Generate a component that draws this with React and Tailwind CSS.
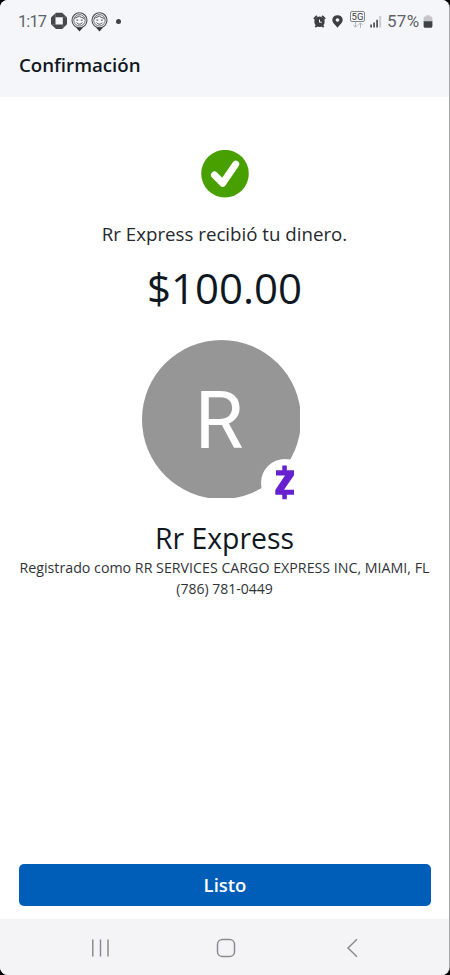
import React from "react";

function BankIcon() {
  return (
    <svg width="18" height="18" viewBox="0 0 18 18" className="shrink-0">
      <path d="M6 .7h6.200l4.800 4.800v6.700L12.200 17H6L1 12.200V5.500z" fill="#46494c" />
      <path d="M5.500 5.200h7.300v7.400H5.500z" fill="#f5f6f9" />
      <path d="M5.500 1v4.200M17 5.200h-4.200M12.800 16.800v-4.200M1 12.600h4.500" stroke="#85888b" strokeWidth=".5" />
    </svg>
  );
}

function FacePin() {
  return (
    <svg width="17" height="20" viewBox="0 0 17 20" className="shrink-0" fill="none" stroke="#4b4e51">
      <path d="M4.800 15.300h7.400L8.500 19.500z" fill="#36393c" stroke="none" />
      <circle cx="8.500" cy="8.300" r="7.500" strokeWidth="1.100" />
      <circle cx="8.500" cy="8.300" r="5.700" strokeWidth=".8" />
      <path d="M3.400 6.900C5.200 4.100 7 5.900 8.400 3.800c1 2.200 3.500 1.300 5.100 3.200M5.400 8.100h1.900M9.800 8.100h1.900M5.600 10.500c1.600 2.200 4.200 2.200 5.800 0" strokeWidth="1" />
    </svg>
  );
}

function AlarmIcon() {
  return (
    <svg width="13" height="13" viewBox="0 0 13 13" className="shrink-0">
      <path d="M.9 4 3.900.9M12.100 4 9.100.9M2.300 12.200l1.600-1.800M10.700 12.200l-1.600-1.800" stroke="#3c3f42" strokeWidth="1.800" />
      <circle cx="6.500" cy="6.800" r="5.200" fill="#3c3f42" />
      <path d="M6.500 4.500v2.700h2.300" fill="none" stroke="#f5f6f9" strokeWidth="1" />
    </svg>
  );
}

function LocationIcon() {
  return (
    <svg width="11" height="13" viewBox="0 0 10 13" className="shrink-0" preserveAspectRatio="none">
      <path d="M5 .2A4.700 4.700 0 0 0 .3 5C.3 8 3.200 9.800 5 12.700 6.800 9.800 9.700 8 9.700 5A4.700 4.700 0 0 0 5 .2zm0 3.100a1.700 1.700 0 1 1 0 3.400 1.700 1.700 0 0 1 0-3.400z" fill="#3c3f42" />
    </svg>
  );
}

function NetworkIcon() {
  return (
    <div className="flex w-[15px] shrink-0 flex-col items-center">
      <div className="flex h-[11px] w-[15px] items-center justify-center rounded-[2px] border border-[#85888b] text-[9.500px] leading-none text-[#3c3f42]">5G</div>
      <svg width="12" height="6" viewBox="0 0 12 6" fill="none" stroke="#b5b7ba" strokeWidth="1">
        <path d="M3.500 0v5M1.300 3l2.200 2.200L5.700 3M8.500 6V1M6.300 3l2.200-2.200L10.700 3" />
      </svg>
    </div>
  );
}

function SignalIcon() {
  return (
    <svg width="12" height="13" viewBox="0 0 12 13" className="shrink-0">
      <path d="M.2 9.500h1.800V12.500H.2zM3.200 7.500H5v5H3.200zM6.200 4.800H8v7.700H6.200z" fill="#56595c" />
      <path d="M9.200 1h2v11.500h-2z" fill="#c9cbce" />
    </svg>
  );
}

function BatteryIcon() {
  return (
    <svg width="10" height="13" viewBox="0 0 10 13" className="shrink-0">
      <path d="M3.200.3h3.600v1.200h1.100c.9 0 1.500.6 1.500 1.500v3.800H.6V3c0-.9.6-1.500 1.500-1.500h1.100z" fill="#c3c5c8" />
      <path d="M.6 6.300h8.800v4.900c0 .9-.6 1.500-1.500 1.500H2.100c-.9 0-1.500-.6-1.500-1.500z" fill="#404346" />
    </svg>
  );
}

function StatusBar() {
  return (
    <div className="flex h-[42px] items-center justify-between pr-[16px] pl-[18px] font-['Roboto',sans-serif] text-[#606366]">
      <div className="flex items-center">
        <span className="w-[32px] pt-[2px] text-[16.500px] tracking-[-0.900px]">1:17</span>
        <BankIcon />
        <span className="ml-[3px] flex gap-[2.500px] pt-px">
          <FacePin />
          <FacePin />
        </span>
        <span className="ml-[8px] size-[5px] rounded-full bg-[#404346]" />
      </div>
      <div className="flex items-center">
        <AlarmIcon />
        <span className="ml-[6px] flex"><LocationIcon /></span>
        <span className="ml-[7px] flex pb-[3px]"><NetworkIcon /></span>
        <span className="ml-[5px] flex"><SignalIcon /></span>
        <span className="ml-[5px] w-[36px] pt-px text-[17px] tracking-[0.300px]">57%</span>
        <BatteryIcon />
      </div>
    </div>
  );
}

function Avatar() {
  return (
    <div className="relative mt-[24px] mr-[8px] h-[158px] w-[158px]">
      <div className="size-full overflow-hidden">
        <div className="flex size-[159px] items-center justify-center rounded-full bg-[#969696] pt-[3px] pr-[4px] font-['Roboto',sans-serif] text-[79px] leading-none text-white">
          R
        </div>
      </div>
      <div className="absolute top-[119px] left-[119px] flex size-[48px] items-start rounded-full bg-white pt-[6px] pl-[14px]">
        <svg width="20" height="35" viewBox="0 0 20 35" fill="#6720cf">
          <path d="M7.300.5h4.500v4.700H19v5L9 24.700h10v5h-7.200v4.600H7.300v-4.600H.3v-4.600L10 10.500H1V5.200h6.300z" />
        </svg>
      </div>
    </div>
  );
}

export default function App() {
  return (
    <div className="h-[975px] w-[450px] overflow-hidden bg-black font-['Open_Sans',sans-serif] text-[#10181f]">
      <div className="flex h-full flex-col overflow-hidden rounded-[8px] border-r border-[#a5a6a8] bg-white">
        <header className="h-[97px] bg-[#f5f6f9]">
          <StatusBar />
          <h1 className="pl-[19px] text-[18.700px] leading-[46px] font-semibold">Confirmación</h1>
        </header>
        <main className="flex flex-1 flex-col items-center">
          <svg width="48" height="48" viewBox="0 0 48 48" className="mt-[53px]">
            <circle cx="24" cy="23.700" r="23.800" fill="#48a000" />
            <path d="m13.500 25 8.200 8.200L34.700 14.200" fill="none" stroke="white" strokeWidth="7" strokeLinecap="round" strokeLinejoin="round" />
          </svg>
          <p className="mt-[22px] text-[18.700px] leading-[28px] whitespace-nowrap text-[#25292d]">Rr Express recibió tu dinero.</p>
          <p className="mt-[12px] text-[42px] leading-[56px]">$100.00</p>
          <Avatar />
          <h2 className="mt-[22px] text-[28.400px] leading-[37px]">Rr Express</h2>
          <p className="text-[14.220px] leading-[21px] whitespace-nowrap text-[#303438]">Registrado como RR SERVICES CARGO EXPRESS INC, MIAMI, FL</p>
          <p className="text-[14px] leading-[21px] text-[#303438]">(786) 781-0449</p>
        </main>
        <div className="pr-[18px] pb-[13px] pl-[19px]">
          <button className="h-[42px] w-full rounded-[5px] bg-[#005eb8] text-[18.500px] font-semibold text-white">Listo</button>
        </div>
        <nav className="flex h-[56px] items-center justify-between bg-[#f4f4f7] pt-px pr-[90px] pl-[91px]">
          <svg width="19" height="20" viewBox="0 0 19 20" stroke="#8b8b8e" strokeWidth="1.500">
            <path d="M1.800 1.500v17M9.500 1.500v17M17 1.500v17" />
          </svg>
          <svg width="20" height="20" viewBox="0 0 20 20" fill="none" stroke="#8b8b8e" strokeWidth="1.500" className="mr-[5px]">
            <rect x="1.500" y="1.500" width="17" height="17" rx="4.800" />
          </svg>
          <svg width="13" height="20" viewBox="0 0 13 20" fill="none" stroke="#8b8b8e" strokeWidth="1.500">
            <path d="M11 1.300 2 10l9 8.700" />
          </svg>
        </nav>
      </div>
    </div>
  );
}
